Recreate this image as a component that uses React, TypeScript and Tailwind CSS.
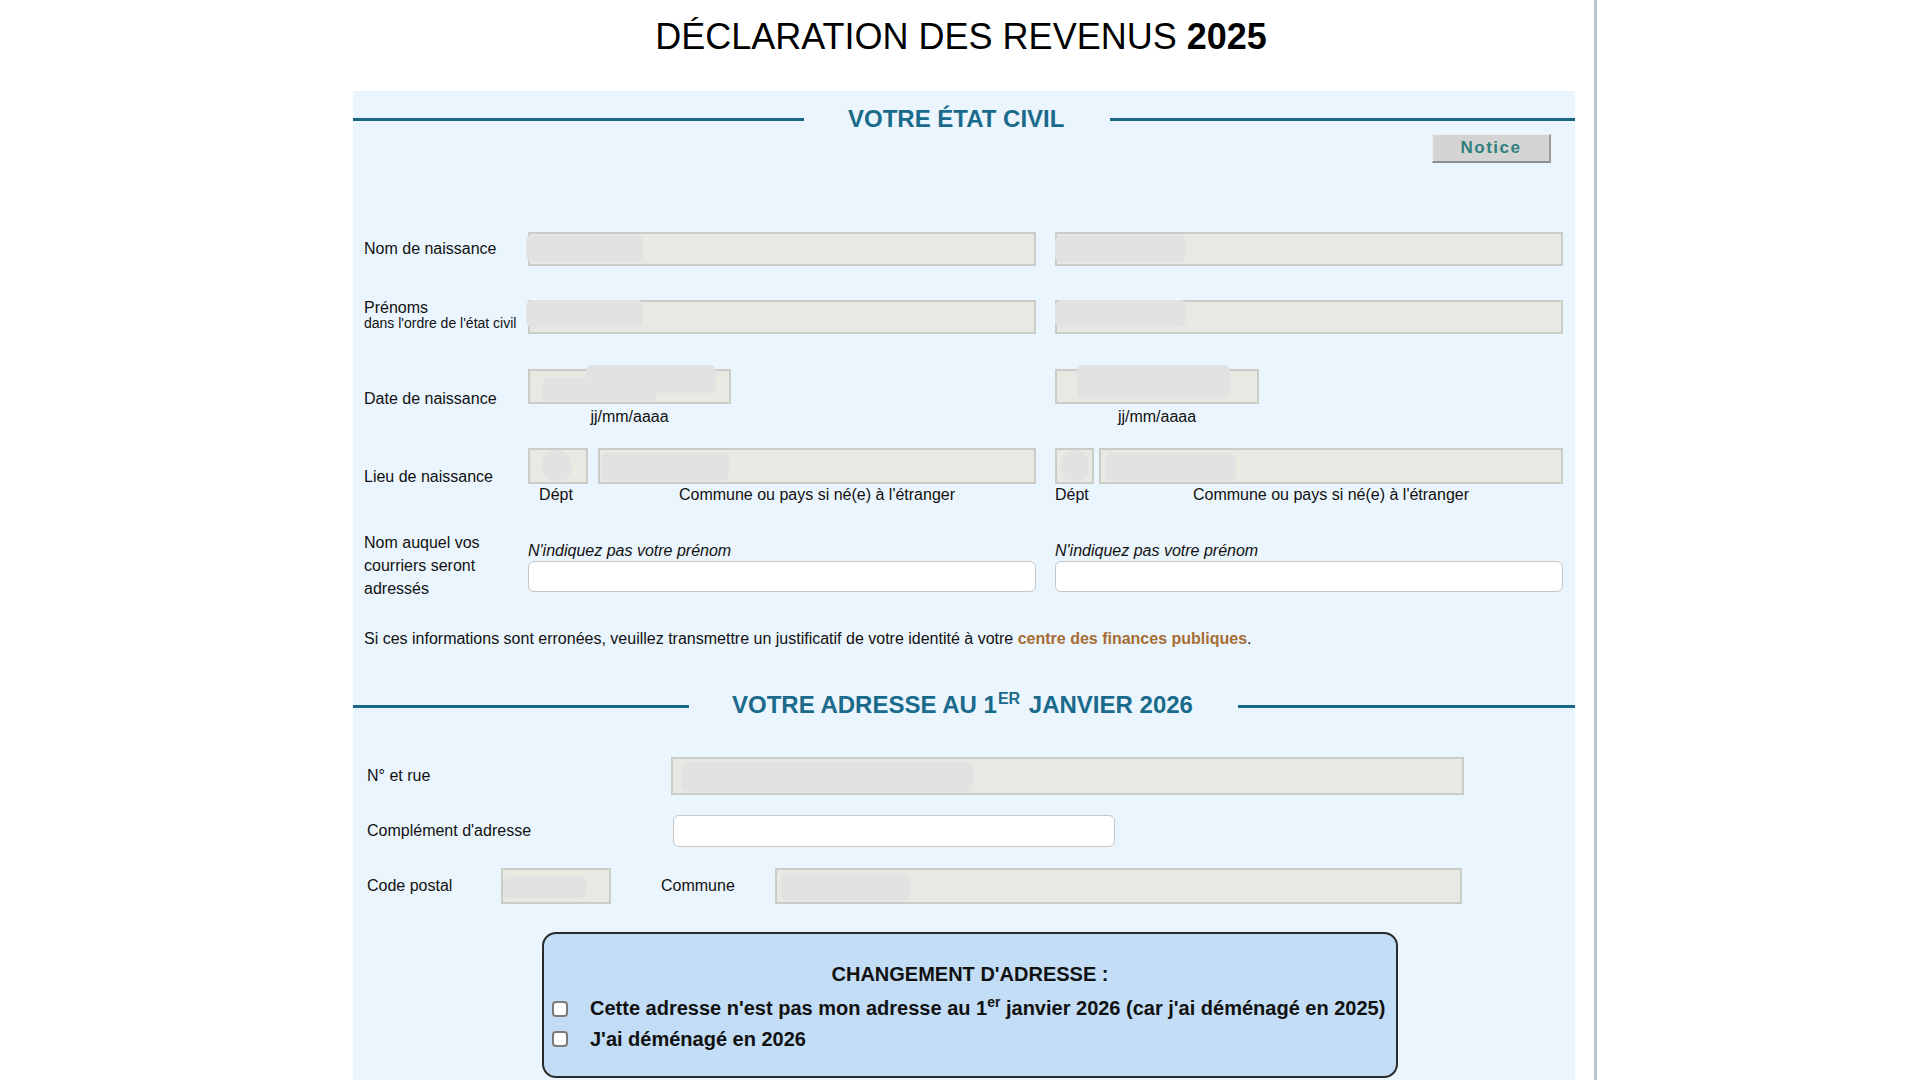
import React from 'react'

type Blot = { l: number; t: number; w: number; h: number; round?: boolean }

// champ grisé (pré-rempli) avec les zones masquées
function GrayInput({ className, blots = [] }: { className: string; blots?: Blot[] }) {
  return (
    <div className={`relative border-2 border-[#cbcbc7] bg-[#e9e9e4] ${className}`}>
      {blots.map((b, i) => (
        <div
          key={i}
          className={b.round ? 'absolute rounded-full bg-[#e1e3e2]' : 'absolute rounded-[6px] bg-[#e1e3e2]'}
          style={{ left: b.l, top: b.t, width: b.w, height: b.h }}
        />
      ))}
    </div>
  )
}

function WhiteInput({ className }: { className: string }) {
  return <div className={`rounded-[6px] border border-[#c4c6c8] bg-white ${className}`} />
}

function Checkbox() {
  return <div className="h-[16px] w-[16px] shrink-0 rounded-[4px] border-2 border-[#7a7a7a] bg-white" />
}

export default function App() {
  return (
    <div className="min-h-screen bg-white font-['Liberation_Sans',Arial,Helvetica,sans-serif] text-[#111]">
      <div className="min-h-screen w-[1597px] border-r-[3px] border-[#b7c6ce] pl-[353px]">
        <div className="w-[1222px]">
          {/* titre */}
          <div className="h-[91px] pt-[17px] pr-[6px] text-center text-[36px] leading-[40px] text-black">
            DÉCLARATION DES REVENUS <span className="font-bold">2025</span>
          </div>

          <div className="min-h-[989px] bg-[#ebf5fd]">
            {/* section état civil */}
            <div className="flex h-[28px] translate-y-[14px] items-center">
              <div className="h-[3px] w-[451px] bg-[#1b6886]" />
              <div className="ml-[44px] mr-[46px] text-[24px] font-bold leading-[28px] text-[#1a6a8b]">VOTRE ÉTAT CIVIL</div>
              <div className="h-[3px] flex-1 bg-[#1b6886]" />
            </div>

            <div className="mt-[15px] flex justify-end pr-[24px]">
              <div className="flex h-[29px] w-[119px] items-center justify-center border border-b-2 border-r-2 border-t-[#ececec] border-l-[#ececec] border-b-[#8d8d8d] border-r-[#9c9c9c] bg-[#d4d4d4] text-[17px] font-bold tracking-[1.5px] text-[#2f7f7c]">
                Notice
              </div>
            </div>

            {/* nom de naissance */}
            <div className="mt-[69px] flex items-center pl-[11px]">
              <div className="w-[164px] text-[16px] leading-[18px]">Nom de naissance</div>
              <GrayInput className="h-[34px] w-[508px]" blots={[{ l: -4, t: 1, w: 117, h: 27 }]} />
              <GrayInput className="ml-[19px] h-[34px] w-[508px]" blots={[{ l: -2, t: 1, w: 131, h: 27 }]} />
            </div>

            {/* prénoms */}
            <div className="mt-[34px] flex items-center pl-[11px]">
              <div className="relative top-[-2px] w-[164px]">
                <div className="text-[16px] leading-[17px]">Prénoms</div>
                <div className="text-[14px] leading-[15px]">dans l'ordre de l'état civil</div>
              </div>
              <GrayInput className="h-[34px] w-[508px]" blots={[{ l: -4, t: -2, w: 117, h: 27 }]} />
              <GrayInput className="ml-[19px] h-[34px] w-[508px]" blots={[{ l: -2, t: -2, w: 131, h: 27 }]} />
            </div>

            {/* date de naissance */}
            <div className="mt-[35px] flex items-start pl-[11px]">
              <div className="mt-[21px] w-[164px] text-[16px] leading-[18px]">Date de naissance</div>
              <div className="w-[508px]">
                <GrayInput
                  className="h-[35px] w-[203px]"
                  blots={[
                    { l: 56, t: -6, w: 130, h: 28 },
                    { l: 12, t: 7, w: 114, h: 24 },
                  ]}
                />
                <div className="mt-[4px] w-[203px] text-center text-[16px] leading-[18px]">jj/mm/aaaa</div>
              </div>
              <div className="ml-[19px] w-[508px]">
                <GrayInput className="h-[35px] w-[204px]" blots={[{ l: 20, t: -6, w: 153, h: 34 }]} />
                <div className="mt-[4px] w-[204px] text-center text-[16px] leading-[18px]">jj/mm/aaaa</div>
              </div>
            </div>

            {/* lieu de naissance */}
            <div className="mt-[22px] flex items-start pl-[11px]">
              <div className="mt-[20px] w-[164px] text-[16px] leading-[18px]">Lieu de naissance</div>
              <div className="w-[508px]">
                <div className="flex">
                  <GrayInput className="h-[36px] w-[60px]" blots={[{ l: 12, t: 0, w: 30, h: 32, round: true }]} />
                  <GrayInput className="ml-[10px] h-[36px] w-[438px]" blots={[{ l: 1, t: 3, w: 128, h: 28 }]} />
                </div>
                <div className="mt-[2px] flex text-[16px] leading-[18px]">
                  <div className="w-[56px] text-center">Dépt</div>
                  <div className="ml-[14px] w-[438px] text-center">Commune ou pays si né(e) à l'étranger</div>
                </div>
              </div>
              <div className="ml-[19px] w-[508px]">
                <div className="flex">
                  <GrayInput className="h-[36px] w-[39px]" blots={[{ l: 4, t: 0, w: 28, h: 32, round: true }]} />
                  <GrayInput className="ml-[5px] h-[36px] w-[464px]" blots={[{ l: 5, t: 3, w: 130, h: 28 }]} />
                </div>
                <div className="mt-[2px] flex text-[16px] leading-[18px]">
                  <div className="w-[39px]">Dépt</div>
                  <div className="ml-[5px] w-[464px] text-center">Commune ou pays si né(e) à l'étranger</div>
                </div>
              </div>
            </div>

            {/* nom pour les courriers */}
            <div className="mt-[27px] flex items-start pl-[11px]">
              <div className="w-[164px] text-[16px] leading-[23px]">Nom auquel vos courriers seront adressés</div>
              <div className="mt-[10px] w-[508px]">
                <div className="text-[16px] italic leading-[20px]">N'indiquez pas votre prénom</div>
                <WhiteInput className="h-[31px] w-[508px]" />
              </div>
              <div className="ml-[19px] mt-[10px] w-[508px]">
                <div className="text-[16px] italic leading-[20px]">N'indiquez pas votre prénom</div>
                <WhiteInput className="h-[31px] w-[508px]" />
              </div>
            </div>

            <div className="mt-[30px] pl-[11px] text-[16px] leading-[18px]">
              Si ces informations sont erronées, veuillez transmettre un justificatif de votre identité à votre{' '}
              <span className="font-bold text-[#a66d35]">centre des finances publiques</span>.
            </div>

            {/* section adresse */}
            <div className="mt-[44px] flex h-[28px] items-center">
              <div className="h-[3px] w-[336px] bg-[#1b6886]" />
              <div className="ml-[43px] mr-[45px] text-[24px] font-bold leading-[28px] text-[#1a6a8b]">
                VOTRE ADRESSE AU 1<span className="relative top-[-9px] ml-[1px] mr-[2px] text-[16px]">ER</span> JANVIER 2026
              </div>
              <div className="h-[3px] flex-1 bg-[#1b6886]" />
            </div>

            <div className="mt-[37px] flex items-center pl-[14px]">
              <div className="w-[304px] text-[16px] leading-[18px]">N° et rue</div>
              <GrayInput className="h-[38px] w-[793px]" blots={[{ l: 8, t: 3, w: 292, h: 30 }]} />
            </div>

            <div className="mt-[20px] flex items-center pl-[14px]">
              <div className="w-[306px] text-[16px] leading-[18px]">Complément d'adresse</div>
              <WhiteInput className="h-[32px] w-[442px]" />
            </div>

            <div className="mt-[21px] flex items-center pl-[14px]">
              <div className="w-[134px] text-[16px] leading-[18px]">Code postal</div>
              <GrayInput className="h-[36px] w-[110px]" blots={[{ l: 0, t: 6, w: 84, h: 22 }]} />
              <div className="ml-[50px] w-[114px] text-[16px] leading-[18px]">Commune</div>
              <GrayInput className="h-[36px] w-[687px]" blots={[{ l: 4, t: 3, w: 129, h: 28 }]} />
            </div>

            {/* changement d'adresse */}
            <div className="ml-[189px] mt-[28px] h-[146px] w-[856px] rounded-[14px] border-2 border-[#2a2a2a] bg-[#c2ddf5] pt-[28px]">
              <div className="text-center text-[20px] font-bold leading-[24px]">CHANGEMENT D'ADRESSE :</div>
              <div className="mt-[8px] flex h-[30px] items-center gap-[22px] pl-[8px]">
                <Checkbox />
                <div className="text-[20px] font-bold leading-[30px]">
                  Cette adresse n'est pas mon adresse au 1<span className="relative top-[-8px] text-[14px]">er</span> janvier 2026 (car j'ai déménagé en 2025)
                </div>
              </div>
              <div className="flex h-[30px] items-center gap-[22px] pl-[8px]">
                <Checkbox />
                <div className="text-[20px] font-bold leading-[30px]">J'ai déménagé en 2026</div>
              </div>
            </div>
          </div>
        </div>
      </div>
    </div>
  )
}
